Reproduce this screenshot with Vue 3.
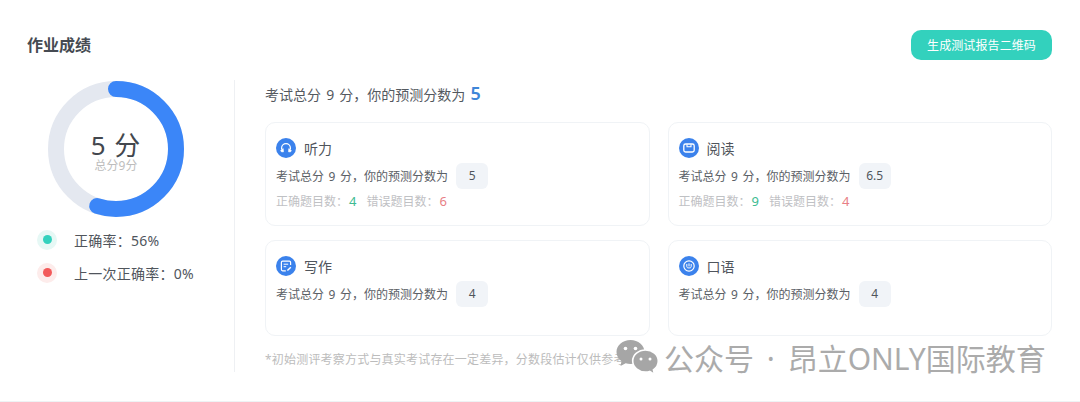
<script setup>
// 四个单项成绩
const cards = [
  { name: '听力', icon: 'listen', score: '5', right: 4, wrong: 6 },
  { name: '阅读', icon: 'read', score: '6.5', right: 9, wrong: 4 },
  { name: '写作', icon: 'write', score: '4' },
  { name: '口语', icon: 'speak', score: '4' }
]

const radius = 60
const circumference = 2 * Math.PI * radius
</script>

<template>
  <div class="panel">
    <div class="head">
      <h2 class="title">作业成绩</h2>
      <button class="qr-btn">生成测试报告二维码</button>
    </div>

    <div class="body">
      <!-- 左侧总分 -->
      <div class="left">
        <div class="donut">
          <svg width="136" height="136" viewBox="0 0 136 136">
            <circle cx="68" cy="68" :r="radius" fill="none" stroke="#e4e8f0" stroke-width="16" />
            <circle
              cx="68"
              cy="68"
              :r="radius"
              fill="none"
              stroke="#3b86f8"
              stroke-width="16"
              stroke-linecap="round"
              :stroke-dasharray="`${circumference * 0.55} ${circumference}`"
              transform="rotate(-90 68 68)"
            />
          </svg>
          <div class="donut-text">
            <div class="big">5 分</div>
            <div class="small">总分9分</div>
          </div>
        </div>
        <div class="legend">
          <span class="dot green"><i></i></span>
          <span>正确率：56%</span>
        </div>
        <div class="legend">
          <span class="dot red"><i></i></span>
          <span>上一次正确率：0%</span>
        </div>
      </div>

      <!-- 右侧明细 -->
      <div class="right">
        <div class="summary">考试总分 9 分，你的预测分数为 <b>5</b></div>
        <div class="grid">
          <div v-for="card in cards" :key="card.name" class="card">
            <div class="card-title">
              <span class="icon">
                <svg width="20" height="20" viewBox="0 0 20 20" fill="none" stroke="#fff" stroke-width="1.2">
                  <template v-if="card.icon === 'listen'">
                    <path d="M5.600 11.500V10a4.400 4.400 0 0 1 8.800 0v1.500" />
                    <path d="M7.200 10.600 4.600 12.600l1 1.300 1.900-.1zM12.800 10.600l2.600 2-1 1.300-1.900-.1z" fill="#fff" stroke-width=".6" />
                  </template>
                  <template v-else-if="card.icon === 'read'">
                    <rect x="4.800" y="6" width="10.400" height="8" rx="1.800" stroke-width="1.300" />
                    <path d="M8 6.200v2.600h4V6.200" stroke-width="1.100" />
                  </template>
                  <template v-else-if="card.icon === 'write'">
                    <path d="M14.600 9V6.400c0-.7-.5-1.200-1.200-1.200H6.600c-.7 0-1.200.5-1.200 1.200v7.200c0 .7.500 1.200 1.200 1.200h3.200" />
                    <path d="M7.600 8.200h4.600M7.600 10.700h2.600" stroke-width="1" />
                    <path d="m11.400 14.600 3.400-3.400" stroke-width="1.400" />
                  </template>
                  <template v-else>
                    <circle cx="10" cy="10" r="5.200" />
                    <path d="M7.800 8v2.300c0 1 .6 1.600 1.300 1.600h1.800c.8 0 1.300-.6 1.300-1.600V8M10 7.400v3" stroke-width="1" />
                  </template>
                </svg>
              </span>
              <span>{{ card.name }}</span>
            </div>
            <div class="card-score">
              <span class="score-text">考试总分 9 分，你的预测分数为</span>
              <span class="badge">{{ card.score }}</span>
            </div>
            <div v-if="card.right !== undefined" class="card-stats">
              <span>正确题目数：<em class="ok">{{ card.right }}</em></span>
              <span>错误题目数：<em class="bad">{{ card.wrong }}</em></span>
            </div>
          </div>
        </div>
        <p class="note">*初始测评考察方式与真实考试存在一定差异，分数段估计仅供参考</p>
      </div>
    </div>

    <!-- 公众号水印 -->
    <div class="watermark">
      <svg width="44" height="38" viewBox="0 0 44 38">
        <path d="M15.500 1C7.800 1 1.500 6.400 1.500 13c0 3.700 2 7 5 9.200L5.500 27l5.200-2.700c1.500.4 3.100.7 4.800.7 7.700 0 14-5.400 14-12S23.200 1 15.500 1z" fill="#a6a6a6" />
        <path d="M30.500 11c-7 0-12.800 4.900-12.800 11s5.800 11 12.800 11c1.500 0 2.900-.2 4.200-.6l4.800 3-1.100-4.500c3-2 4.900-5.200 4.900-8.900 0-6.100-5.800-11-12.800-11z" fill="#a6a6a6" stroke="#fff" stroke-width="1.600" />
        <circle cx="10.500" cy="9.500" r="1.800" fill="#fff" />
        <circle cx="20.500" cy="9.500" r="1.800" fill="#fff" />
        <circle cx="26" cy="20" r="1.500" fill="#fff" />
        <circle cx="35" cy="20" r="1.500" fill="#fff" />
      </svg>
      <span class="mark-text">公众号 · 昂立ONLY国际教育</span>
    </div>
  </div>
</template>

<style scoped>
.panel {
  position: relative;
  width: 1080px;
  height: 402px;
  box-sizing: border-box;
  padding: 30px 28px 0 27px;
  background: #fff;
  border-bottom: 1px solid #eef3f5;
  color: #4a4f57;
  font-family: "Noto Sans", "Noto Sans CJK SC", sans-serif;
  overflow: hidden;
}

.head {
  display: flex;
  justify-content: space-between;
  align-items: center;
  height: 30px;
}

.title {
  margin: 0;
  font-size: 16px;
  font-weight: 700;
  line-height: 30px;
  color: #464b52;
}

.qr-btn {
  width: 141px;
  height: 30px;
  padding: 0;
  border: none;
  border-radius: 10px;
  background: #33d1bd;
  color: #fff;
  font-family: inherit;
  font-size: 12px;
  font-weight: 400;
  letter-spacing: 0.1px;
}

.body {
  display: flex;
  margin-top: 20px;
}

.left {
  width: 207px;
  height: 292px;
  border-right: 1px solid #eef0f3;
}

.donut {
  display: grid;
  place-items: center;
  width: 136px;
  height: 136px;
  margin: 1px 0 0 21px;
}

.donut > * {
  grid-area: 1 / 1;
}

.donut-text {
  padding-top: 5px;
  text-align: center;
}

.big {
  font-size: 26px;
  line-height: 28px;
  letter-spacing: 1px;
  color: #43474e;
}

.small {
  font-size: 12px;
  line-height: 13px;
  color: #bdbdbd;
}

.legend {
  display: flex;
  align-items: center;
  height: 33px;
  margin-left: 10px;
  font-size: 14px;
  letter-spacing: 0.25px;
  color: #50555c;
}

.left .donut + .legend {
  margin-top: 6px;
}

.dot {
  display: grid;
  place-items: center;
  flex: none;
  width: 20px;
  height: 20px;
  margin-right: 17px;
  border-radius: 50%;
}

.dot i {
  width: 9px;
  height: 9px;
  border-radius: 50%;
}

.dot.green {
  background: #e6f8f5;
}

.dot.green i {
  background: #33d1bd;
}

.dot.red {
  background: #fdeceb;
}

.dot.red i {
  background: #f25a5a;
}

.right {
  flex: 1;
  padding-left: 30px;
}

.summary {
  height: 26px;
  font-size: 14px;
  line-height: 26px;
  word-spacing: 1.5px;
  color: #54595f;
}

.summary b {
  font-size: 18px;
  font-weight: 600;
  color: #3f86d8;
}

.grid {
  display: grid;
  grid-template-columns: 1fr 1fr;
  grid-template-rows: 104px 96px;
  gap: 14px 18px;
  margin-top: 16px;
}

.card {
  box-sizing: border-box;
  padding: 15px 10px 0;
  border: 1px solid #f0f3f6;
  border-radius: 10px;
}

.card-title {
  display: flex;
  align-items: center;
  gap: 8px;
  height: 20px;
  font-size: 14px;
  color: #50555c;
}

.icon {
  display: block;
  width: 20px;
  height: 20px;
  border-radius: 50%;
  background: #3b82ec;
}

.icon svg {
  display: block;
}

.card-score {
  display: flex;
  align-items: center;
  gap: 8px;
  margin-top: 5px;
  font-size: 12px;
  color: #5b6066;
}

.score-text {
  word-spacing: 1.5px;
}

.badge {
  width: 32px;
  height: 26px;
  border-radius: 6px;
  background: #f1f4f8;
  text-align: center;
  line-height: 26px;
  color: #50555c;
}

.card-stats {
  display: flex;
  gap: 10px;
  margin-top: 2px;
  font-size: 12px;
  line-height: 20px;
  color: #bfc1c4;
}

.card-stats em {
  margin-left: 1px;
  font-size: 13px;
  font-style: normal;
}

.ok {
  color: #3dbb92;
}

.bad {
  color: #e88086;
}

.note {
  margin: 14px 0 0;
  font-size: 12px;
  line-height: 20px;
  letter-spacing: 0.2px;
  color: #bcbcbc;
}

.watermark {
  position: absolute;
  left: 615px;
  top: 339px;
  display: flex;
  align-items: center;
  gap: 5px;
  height: 38px;
  white-space: nowrap;
  color: #ababab;
}

.mark-text {
  margin-bottom: 3px;
  font-size: 30px;
  word-spacing: 5px;
}
</style>

<style>
body {
  background: #fff;
}
</style>
